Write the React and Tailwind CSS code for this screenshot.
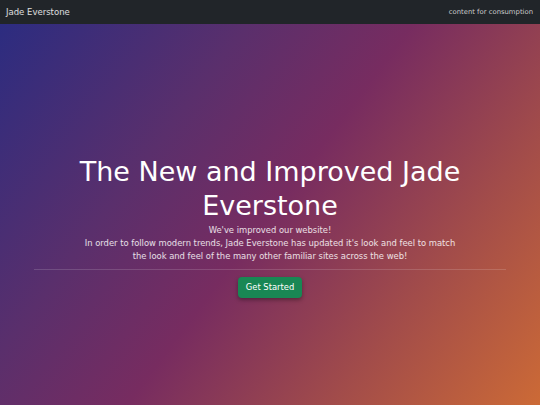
export default function App() {
  return (
    <div className="flex h-[405px] w-[540px] flex-col overflow-hidden font-['DejaVu_Sans',sans-serif]">
      <nav className="flex h-[24px] shrink-0 items-center justify-between bg-[#212529] pl-[6px] pr-[7px]">
        <span className="text-[8.5px] text-white/85">Jade Everstone</span>
        <span className="text-[6.85px] text-white/75">content for consumption</span>
      </nav>
      <main className="flex flex-1 flex-col items-center justify-center bg-[linear-gradient(127deg,#2c2c80_0%,#5a2f6c_30%,#772c60_50%,#a24c4a_75%,#cc6a36_100%)] px-[34px] pt-[23px] text-center text-white">
        <h1 className="text-[27px] leading-[34px] font-normal">The New and Improved Jade Everstone</h1>
        <p className="mt-[1px] text-[8.4px] leading-[13px] text-white/85">
          We've improved our website!
          <br />
          In order to follow modern trends, Jade Everstone has updated it's look and feel to match
          <br />
          the look and feel of the many other familiar sites across the web!
        </p>
        <hr className="mt-[6px] w-full border-t border-white/15" />
        <button className="mt-[7px] rounded-[4px] bg-[#198754] px-[8px] py-[4px] text-[8.4px] leading-[13px] text-white shadow-[0_2px_4px_rgba(0,0,0,0.35)]">
          Get Started
        </button>
      </main>
    </div>
  );
}
